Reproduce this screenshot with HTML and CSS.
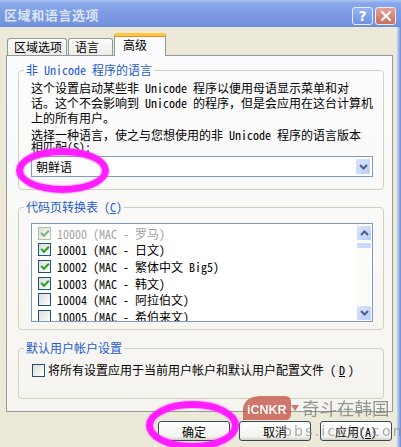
FILE: index.html
```html
<!DOCTYPE html>
<html lang="zh-CN">

<head>
    <meta charset="UTF-8">
    <meta name="viewport" content="width=device-width, initial-scale=1.0">
    <title>区域和语言选项</title>
    <link rel="stylesheet" href="styles.css">
</head>

<body>
    <div class="window">
        <div class="titlebar">
            <span class="title">区域和语言选项</span>
            <div class="caption-btns">
                <span class="cap help">?</span>
                <span class="cap close">
                    <svg width="12" height="12" viewBox="0 0 12 12">
                        <path d="M2 2 L10 10 M10 2 L2 10" stroke="#fff" stroke-width="2.2" stroke-linecap="round" />
                    </svg>
                </span>
            </div>
        </div>

        <div class="frame">
            <div class="client">
                <div class="tabs">
                    <div class="tab t1">区域选项</div>
                    <div class="tab t2">语言</div>
                    <div class="tab t3 active">高级</div>
                </div>

                <div class="panel">
                    <fieldset class="group g1">
                        <legend>非 Unicode 程序的语言</legend>
                        <p class="desc">这个设置启动某些非 Unicode 程序以便用母语显示菜单和对<br>话。这个不会影响到 Unicode 的程序，但是会应用在这台计算机<br>上的所有用户。</p>
                        <p class="prompt">选择一种语言，使之与您想使用的非 Unicode 程序的语言版本<br>相匹配(<u>S</u>):</p>
                        <div class="combo">
                            <span class="combo-text">朝鲜语</span>
                            <span class="sbtn">
                                <svg width="9" height="6" viewBox="0 0 9 6"><path d="M1 1 L4.5 4.5 L8 1" fill="none" stroke="#4d6185" stroke-width="2" /></svg>
                            </span>
                        </div>
                    </fieldset>

                    <fieldset class="group g2">
                        <legend>代码页转换表 (<u>C</u>)</legend>
                        <div class="listbox">
                            <ul class="items">
                                <li class="disabled"><span class="cb on"></span>10000 (MAC - 罗马)</li>
                                <li><span class="cb on"></span>10001 (MAC - 日文)</li>
                                <li><span class="cb on"></span>10002 (MAC - 繁体中文 Big5)</li>
                                <li><span class="cb on"></span>10003 (MAC - 韩文)</li>
                                <li><span class="cb"></span>10004 (MAC - 阿拉伯文)</li>
                                <li><span class="cb"></span>10005 (MAC - 希伯来文)</li>
                            </ul>
                            <div class="vscroll">
                                <span class="sbtn">
                                    <svg width="9" height="6" viewBox="0 0 9 6"><path d="M1 5 L4.5 1.5 L8 5" fill="none" stroke="#4d6185" stroke-width="2" /></svg>
                                </span>
                                <span class="thumb"></span>
                                <span class="track"></span>
                                <span class="sbtn">
                                    <svg width="9" height="6" viewBox="0 0 9 6"><path d="M1 1 L4.5 4.5 L8 1" fill="none" stroke="#4d6185" stroke-width="2" /></svg>
                                </span>
                            </div>
                        </div>
                    </fieldset>

                    <fieldset class="group g3">
                        <legend>默认用户帐户设置</legend>
                        <div class="check-row"><span class="cb"></span>将所有设置应用于当前用户帐户和默认用户配置文件 (<u>D</u>)</div>
                    </fieldset>
                </div>

                <div class="buttons">
                    <button class="btn">确定</button>
                    <button class="btn">取消</button>
                    <button class="btn">应用(<u>A</u>)</button>
                </div>
            </div>
            <div class="edge"></div>
        </div>

        <!-- marks drawn over the screenshot -->
        <div class="ring ring-combo"></div>
        <div class="ring ring-ok"></div>
        <div class="watermark">
            <svg class="logo" width="58" height="26" viewBox="0 0 58 26">
                <path d="M1 25 L1 13 Q3 2 17 1 L43 1 Q49 1 49 7 L49 19 Q49 25 43 25 Z" fill="#c95a4c" />
                <path d="M49 10 L57 10 L53 16 Z" fill="#c95a4c" />
                <text x="5" y="19" fill="#fff" font-family="Liberation Sans" font-weight="bold" font-size="12.5">iCNKR</text>
            </svg>
            <span class="wm-name">奇斗在韩国</span>
        </div>
        <div class="wm-url">bbs.icnkr.com</div>
    </div>
</body>

</html>
```

FILE: styles.css
```css
* {
    box-sizing: border-box;
}

body {
    margin: 0;
    width: 401px;
    height: 447px;
    overflow: hidden;
    font-family: "Noto Sans Mono CJK SC", "Noto Sans CJK SC", sans-serif;
    font-size: 12px;
    color: #000;
    background: #ece9d8;
}

.window {
    position: relative;
    width: 401px;
    height: 447px;
    display: flex;
    flex-direction: column;
}

/* title bar */
.titlebar {
    height: 27px;
    flex: none;
    display: flex;
    align-items: center;
    padding: 0 5px 0 4px;
    background: linear-gradient(#aec4f2 0, #8aa8ea 3px, #7d9ce3 45%, #7695df 85%, #6d8dd9 100%);
}

.title {
    flex: 1;
    color: #dbe5f8;
    font: bold 13px "Noto Sans CJK SC", sans-serif;
    letter-spacing: 0.6px;
    padding-top: 2px;
}

.caption-btns {
    display: flex;
    gap: 2px;
    align-self: flex-end;
    margin-bottom: 2px;
}

.cap {
    width: 21px;
    height: 18px;
    border: 1px solid #e6edfb;
    border-radius: 3px;
    display: flex;
    align-items: center;
    justify-content: center;
}

.help {
    background: linear-gradient(#93b3f2, #6f92e2);
    color: #fff;
    font: bold 14px "DejaVu Sans", sans-serif;
}

.close {
    background: linear-gradient(#e7a093, #c8705f);
}

/* client area */
.frame {
    flex: 1;
    display: flex;
}

.client {
    flex: 1;
    display: flex;
    flex-direction: column;
    padding: 6px 4px 0 6px;
}

.edge {
    width: 6px;
    background: linear-gradient(to right, #c3d2f3 0, #9fb6ec 2px, #7b9ae2 3px, #6e8ed9 100%);
}

/* tabs */
.tabs {
    display: flex;
    align-items: flex-end;
    height: 22px;
    padding-left: 1px;
}

.tab {
    height: 17px;
    border: 1px solid #919b9c;
    border-bottom: none;
    border-radius: 3px 3px 0 0;
    background: linear-gradient(#fefefe, #ecebe5);
    line-height: 16px;
    padding-left: 6px;
    margin-right: 1px;
}

.t1 {
    width: 60px;
}

.t2 {
    width: 45px;
}

.tab.active {
    width: 52px;
    height: 23px;
    margin-bottom: -1px;
    padding-left: 8px;
    border-top: 3px solid #ffc83c;
    background: #fcfcfe;
    line-height: 18px;
    position: relative;
    z-index: 1;
    box-shadow: inset 0 1px #e68b2c;
}

/* tab page */
.panel {
    height: 357px;
    border: 1px solid #919b9c;
    background: linear-gradient(#fcfcfe, #f5f4ef);
    padding: 7px 8px 0 11px;
    display: flex;
    flex-direction: column;
}

.group {
    margin: 0;
    border: 1px solid #d0d0bf;
    border-radius: 4px;
    padding: 0 10px 0 12px;
}

.group legend {
    color: #1f5bd0;
    line-height: 14px;
    padding: 0 2px;
    margin-left: -7px;
}

.g1 {
    height: 127px;
}

.g2 {
    height: 130px;
    margin-top: 10px;
}

.g3 {
    height: 58px;
    margin-top: 11px;
}

.desc {
    margin: 3px 0 0;
    line-height: 15px;
    white-space: nowrap;
}

.prompt {
    margin: 4px 0 0;
    line-height: 12px;
    white-space: nowrap;
}

.combo {
    margin-top: 3px;
    height: 21px;
    border: 1px solid #7f9db9;
    background: #fff;
    display: flex;
    align-items: center;
    padding: 1px;
    position: relative;
}

.combo-text {
    flex: 1;
    padding-left: 3px;
}

.sbtn {
    width: 16px;
    height: 17px;
    border: 1px solid #fff;
    border-radius: 2px;
    background: linear-gradient(135deg, #dbe6fe, #b9cdf9);
    display: flex;
    align-items: center;
    justify-content: center;
}

/* list box */
.listbox {
    margin-top: 9px;
    height: 99px;
    border: 1px solid #7f9db9;
    background: #fff;
    display: flex;
    overflow: hidden;
}

.items {
    flex: 1;
    list-style: none;
    margin: 0;
    padding: 1px 0 0 6px;
}

.items li {
    height: 16.6px;
    display: flex;
    align-items: center;
    gap: 6px;
    white-space: nowrap;
}

.items li.disabled {
    color: #a3a3a3;
}

.vscroll {
    width: 16px;
    display: flex;
    flex-direction: column;
    background: #fbfbf8;
    padding-top: 1px;
}

.vscroll .sbtn {
    height: 16px;
}

.thumb {
    height: 7px;
    margin-top: 1px;
    border: 1px solid #fff;
    border-radius: 2px;
    background: #c9d8fc;
}

.track {
    flex: 1;
}

/* checkboxes */
.cb {
    flex: none;
    width: 13px;
    height: 13px;
    border: 1px solid #1c5180;
    background: linear-gradient(135deg, #dcdcd7, #fefefe);
    display: inline-flex;
    align-items: center;
    justify-content: center;
}

.cb.on::after {
    content: "";
    width: 6px;
    height: 3px;
    border-left: 2px solid #21a121;
    border-bottom: 2px solid #21a121;
    transform: translateY(-1px) rotate(-45deg);
}

.disabled .cb {
    border-color: #a9c8a9;
}

.disabled .cb.on::after {
    border-color: #73b973;
}

.check-row {
    margin-top: 8px;
    margin-left: 1px;
    display: flex;
    align-items: center;
    gap: 3px;
    line-height: 14px;
    white-space: nowrap;
}

/* dialog buttons */
.buttons {
    display: flex;
    justify-content: flex-end;
    gap: 9px;
    margin-top: 9px;
    padding-right: 1px;
}

.btn {
    width: 72px;
    height: 20px;
    padding: 0;
    font: inherit;
    color: #000;
    border: 1px solid #35485e;
    border-radius: 3px;
    background: linear-gradient(#ffffff, #f3f3ef 80%, #d6d0c5);
}

/* marks over the screenshot */
.ring {
    position: absolute;
    border: 7px solid #ff1eff;
    border-radius: 50%;
    filter: blur(0.4px);
    box-shadow: 0 0 2px #ff3cff, inset 0 0 2px #ff3cff;
}

.ring-combo {
    left: 16px;
    top: 148px;
    width: 93px;
    height: 45px;
}

.ring-ok {
    left: 146px;
    top: 401px;
    width: 93px;
    height: 49px;
}

.watermark {
    position: absolute;
    left: 242px;
    top: 395px;
    display: flex;
    align-items: center;
    gap: 2px;
    opacity: 0.8;
    white-space: nowrap;
}

.wm-name {
    font: 17.5px "Noto Sans CJK SC", sans-serif;
    color: #7d7d7d;
    line-height: 26px;
}

.wm-url {
    position: absolute;
    left: 283px;
    top: 423px;
    font: 14px "DejaVu Sans", sans-serif;
    letter-spacing: 2.2px;
    color: #8a8a8a;
    opacity: 0.7;
}
```
